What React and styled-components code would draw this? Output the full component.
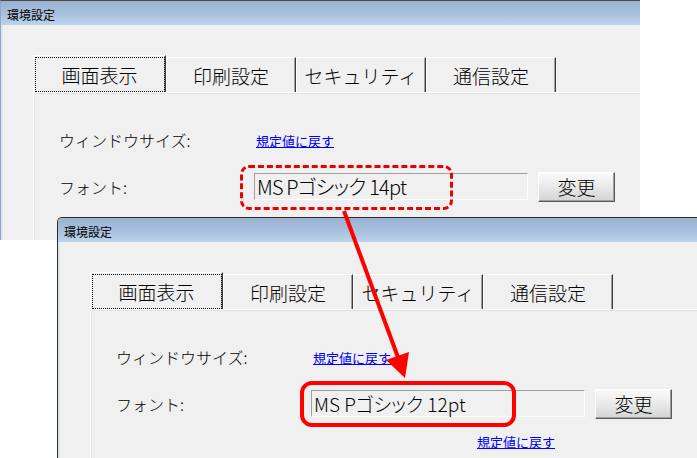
import React from "react";
import styled, { createGlobalStyle, css } from "styled-components";

const GlobalStyle = createGlobalStyle`
  html, body {
    margin: 0;
    padding: 0;
    background: #ffffff;
  }
  body {
    font-family: "Noto Sans CJK JP", "Noto Sans", sans-serif;
  }
`;

const JP = `"Noto Sans CJK JP", "Liberation Sans", sans-serif`;

function SettingsWindow({ x, y, width, height, rounded, fontSize, tracking, fontLabel }) {
  return (
    <Window $x={x} $y={y} $w={width} $h={height} $rounded={rounded}>
      <TitleBar>
        <Title>環境設定</Title>
      </TitleBar>
      <Body>
        <TabStrip>
          <Tab $active>画面表示</Tab>
          <Tab>印刷設定</Tab>
          <Tab>セキュリティ</Tab>
          <Tab>通信設定</Tab>
        </TabStrip>
        <Panel>
          <Row>
            <Label>ウィンドウサイズ:</Label>
            <Link href="#">規定値に戻す</Link>
          </Row>
          <Row $gap>
            <Label>フォント:</Label>
            <TextBox $size={fontSize} $tracking={tracking}>
              {fontLabel}
            </TextBox>
            <Button>変更</Button>
          </Row>
          <LinkRow>
            <Link href="#">規定値に戻す</Link>
          </LinkRow>
        </Panel>
      </Body>
    </Window>
  );
}

function App() {
  return (
    <>
      <GlobalStyle />
      <Canvas>
        <SettingsWindow
          x={0}
          y={0}
          width={640}
          height={240}
          fontSize={20}
          tracking={-0.8}
          fontLabel="MS Pゴシック 14pt"
        />
        <SettingsWindow
          x={57}
          y={217}
          width={660}
          height={260}
          rounded
          fontSize={19}
          tracking={0}
          fontLabel="MS Pゴシック 12pt"
        />
        <DashedMark />
        <Arrow width="697" height="458" viewBox="0 0 697 458">
          <line x1="344" y1="211" x2="399" y2="360" stroke="#ff0000" strokeWidth="4" />
          <polygon points="405,378 386,360 409,352" fill="#ff0000" />
        </Arrow>
        <SolidMark />
      </Canvas>
    </>
  );
}

const Canvas = styled.div`
  position: relative;
  width: 697px;
  height: 458px;
  overflow: hidden;
  background: #ffffff;
`;

const Window = styled.div`
  position: absolute;
  left: ${(p) => p.$x}px;
  top: ${(p) => p.$y}px;
  width: ${(p) => p.$w}px;
  height: ${(p) => p.$h}px;
  overflow: hidden;
  display: flex;
  flex-direction: column;
  box-sizing: border-box;
  border-top: 1px solid #4a4a4a;
  border-left: 1px solid #8ea8c6;
  background: #f0f0f0;
  ${(p) =>
    p.$rounded &&
    css`
      border-top: 1px solid #2e2e2e;
      border-left: 1px solid #2e2e2e;
      border-top-left-radius: 5px;
    `}
`;

const TitleBar = styled.div`
  height: 24px;
  flex-shrink: 0;
  display: flex;
  align-items: center;
  background: linear-gradient(#9bb2cf, #a9c1de 55%, #bcd3ec);
`;

const Title = styled.span`
  font-family: ${JP};
  font-size: 12px;
  color: #000;
  padding-left: 6px;
  padding-top: 2px;
`;

const Body = styled.div`
  flex: 1;
  display: flex;
  flex-direction: column;
  padding: 30px 0 0 32px;
  box-shadow: inset 2px 0 0 #dde5ee;
`;

const TabStrip = styled.div`
  display: flex;
  align-items: flex-end;
  height: 37px;
`;

const Tab = styled.div`
  position: relative;
  width: 130px;
  height: 35px;
  box-sizing: border-box;
  display: flex;
  align-items: center;
  justify-content: center;
  font-family: ${JP};
  font-size: 19px;
  font-weight: 300;
  color: #000;
  background: #f0f0f0;
  border-top: 1px solid #ffffff;
  border-left: 1px solid #ffffff;
  border-right: 1px solid #3c3c3c;
  box-shadow: inset -1px 0 0 #a0a0a0;
  ${(p) =>
    p.$active &&
    css`
      width: 133px;
      height: 37px;
      &::after {
        content: "";
        position: absolute;
        inset: 1px 0 0 1px;
        border: 1px dotted #000;
      }
    `}
`;

const Panel = styled.div`
  flex: 1;
  border-top: 1px solid #ffffff;
  border-left: 1px solid #ffffff;
  box-shadow: inset 1px 1px 0 #e3e3e3;
  padding: 38px 0 0 25px;
  display: flex;
  flex-direction: column;
`;

const Row = styled.div`
  display: flex;
  align-items: center;
  height: ${(p) => (p.$gap ? 31 : 18)}px;
  margin-top: ${(p) => (p.$gap ? 22 : 0)}px;
`;

const Label = styled.div`
  width: 195px;
  flex-shrink: 0;
  font-family: ${JP};
  font-size: 16px;
  font-weight: 300;
  color: #000;
`;

const Link = styled.a`
  font-family: ${JP};
  font-size: 13px;
  color: #0000ff;
  text-decoration: underline;
  margin-left: 2px;
`;

const TextBox = styled.div`
  width: 274px;
  height: 27px;
  box-sizing: border-box;
  display: flex;
  align-items: center;
  padding-left: 2px;
  border: 1px solid #ffffff;
  border-top-color: #a0a0a0;
  border-left-color: #a0a0a0;
  font-family: ${JP};
  font-size: ${(p) => p.$size}px;
  font-weight: 300;
  letter-spacing: ${(p) => p.$tracking}px;
  font-feature-settings: "palt";
  color: #000;
  white-space: nowrap;
`;

const Button = styled.button`
  margin-left: 10px;
  width: 77px;
  height: 30px;
  box-sizing: border-box;
  padding: 0;
  font-family: ${JP};
  font-size: 19px;
  font-weight: 300;
  color: #000;
  background: linear-gradient(#fafafa, #e9e9e9 50%, #d4d4d4);
  border: 1px solid #ffffff;
  border-right-color: #5a5a5a;
  border-bottom-color: #5a5a5a;
  box-shadow: inset -1px -1px 0 #a0a0a0;
`;

const LinkRow = styled.div`
  padding-left: 359px;
  margin-top: 9px;
`;

const DashedMark = styled.div`
  position: absolute;
  left: 240px;
  top: 165px;
  width: 213px;
  height: 45px;
  box-sizing: border-box;
  border: 3px dashed #ee0000;
  border-radius: 9px;
`;

const SolidMark = styled.div`
  position: absolute;
  left: 300px;
  top: 381px;
  width: 216px;
  height: 46px;
  box-sizing: border-box;
  border: 4px solid #ff0000;
  border-radius: 12px;
`;

const Arrow = styled.svg`
  position: absolute;
  left: 0;
  top: 0;
  pointer-events: none;
`;

export default App;
